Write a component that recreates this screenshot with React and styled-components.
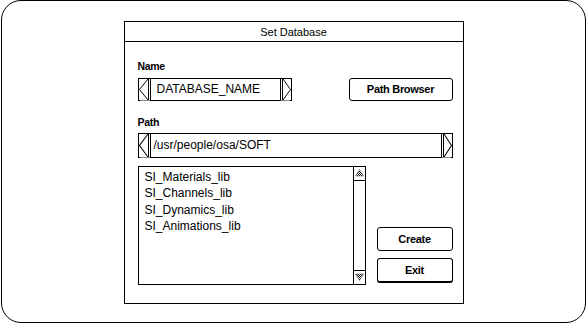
import React from 'react';
import styled, { createGlobalStyle } from 'styled-components';

const GlobalStyle = createGlobalStyle`
  html, body {
    margin: 0;
    padding: 0;
    background: #fff;
  }
  body {
    font-family: "Liberation Sans", Arial, sans-serif;
    color: #000;
  }
`;

const Frame = styled.div`
  box-sizing: border-box;
  width: 585px;
  height: 323px;
  margin: 0 1px;
  border: 1px solid #000;
  border-radius: 20px;
  display: flex;
  align-items: center;
  justify-content: center;
`;

const Dialog = styled.div`
  box-sizing: border-box;
  width: 340px;
  height: 283px;
  margin-top: 1px;
  border: 1px solid #000;
  display: flex;
  flex-direction: column;
`;

const TitleBar = styled.div`
  height: 19px;
  border-bottom: 1px solid #000;
  font-size: 11px;
  line-height: 20px;
  text-align: center;
`;

const Body = styled.div`
  padding: 18px 10px 0 13px;
  display: flex;
  flex-direction: column;
`;

const Label = styled.div`
  font-size: 10.5px;
  font-weight: bold;
  line-height: 13px;
  letter-spacing: -0.3px;
  margin-top: ${(p) => p.$top || 0}px;
  margin-bottom: ${(p) => p.$bottom || 4}px;
`;

const Row = styled.div`
  display: flex;
  align-items: ${(p) => p.$align || 'flex-start'};
  justify-content: space-between;
`;

const Field = styled.div`
  box-sizing: border-box;
  width: ${(p) => p.$width};
  height: ${(p) => p.$height}px;
  border: 1px solid #000;
  display: flex;
  align-items: stretch;
`;

const FieldText = styled.div`
  flex: 1;
  padding-left: ${(p) => p.$pad}px;
  font-size: 12px;
  display: flex;
  align-items: center;
  white-space: nowrap;
  overflow: hidden;
`;

const ArrowBox = styled.div`
  width: ${(p) => p.$w}px;
  box-shadow: 0 2px 0 -1px #8a8a8a;
  display: flex;
`;

const Button = styled.button`
  box-sizing: border-box;
  width: ${(p) => p.$width}px;
  height: ${(p) => p.$height}px;
  padding: 0;
  background: #fff;
  border: 1px solid #000;
  border-bottom: ${(p) => (p.$default ? '2px solid #000' : '1px solid #000')};
  border-radius: 3px;
  font-family: "Liberation Sans", Arial, sans-serif;
  font-size: 11px;
  font-weight: bold;
  letter-spacing: -0.3px;
  color: #000;
`;

const ListArea = styled.div`
  box-sizing: border-box;
  width: 228px;
  height: 119px;
  border: 1px solid #000;
  display: flex;
`;

const ListItems = styled.ul`
  flex: 1;
  margin: 0;
  padding: 2px 0 0 6px;
  list-style: none;
  font-size: 12px;
  line-height: 16.6px;
`;

const ScrollBar = styled.div`
  width: 11px;
  border-left: 1px solid #000;
  display: flex;
  flex-direction: column;
  justify-content: space-between;
`;

const ScrollButton = styled.div`
  height: 13px;
  border-${(p) => (p.$down ? 'top' : 'bottom')}: 1px solid #000;
  display: flex;
  align-items: center;
  justify-content: center;
`;

const ButtonColumn = styled.div`
  display: flex;
  flex-direction: column;
  gap: 7px;
  padding-bottom: 2px;
`;

const LeftArrow = () => (
  <svg width="12" height="100%" viewBox="0 0 12 22" preserveAspectRatio="none">
    <polyline points="9,0 0.5,11 9,22" fill="none" stroke="#000" strokeWidth="1" />
    <line x1="9.5" y1="0" x2="9.5" y2="22" stroke="#000" strokeWidth="1" />
    <line x1="11.5" y1="0" x2="11.5" y2="22" stroke="#000" strokeWidth="1" />
  </svg>
);

const RightArrow = () => (
  <svg width="11" height="100%" viewBox="0 0 11 22" preserveAspectRatio="none">
    <line x1="0.5" y1="0" x2="0.5" y2="22" stroke="#000" strokeWidth="1" />
    <line x1="2.5" y1="0" x2="2.5" y2="22" stroke="#000" strokeWidth="1" />
    <polyline points="3,0 10.5,11 3,22" fill="none" stroke="#000" strokeWidth="1" />
  </svg>
);

const Triangle = ({ down }) => (
  <svg width="9" height="8" viewBox="0 0 9 8">
    <defs>
      <pattern id={down ? 'dd' : 'du'} width="2" height="2" patternUnits="userSpaceOnUse">
        <rect width="1" height="1" fill="#000" />
        <rect x="1" y="1" width="1" height="1" fill="#000" />
      </pattern>
    </defs>
    <polygon
      points={down ? '0.5,1 8.5,1 4.5,7.5' : '4.5,0.5 8.5,7 0.5,7'}
      fill={`url(#${down ? 'dd' : 'du'})`}
      stroke="#666"
      strokeWidth="0.6"
    />
  </svg>
);

const SpinField = ({ value, width, height, pad }) => (
  <Field $width={width} $height={height}>
    <ArrowBox $w={12}>
      <LeftArrow />
    </ArrowBox>
    <FieldText $pad={pad}>{value}</FieldText>
    <ArrowBox $w={11}>
      <RightArrow />
    </ArrowBox>
  </Field>
);

const libs = ['SI_Materials_lib', 'SI_Channels_lib', 'SI_Dynamics_lib', 'SI_Animations_lib'];

export default function App() {
  return (
    <>
      <GlobalStyle />
      <Frame>
        <Dialog>
          <TitleBar>Set Database</TitleBar>
          <Body>
            <Label $bottom={5}>Name</Label>
            <Row>
              <SpinField value="DATABASE_NAME" width="154px" height={23} pad={6} />
              <Button $width={104} $height={23}>Path Browser</Button>
            </Row>
            <Label $top={15}>Path</Label>
            <SpinField value="/usr/people/osa/SOFT" width="100%" height={25} pad={3} />
            <Row $align="flex-end" style={{ marginTop: 8 }}>
              <ListArea>
                <ListItems>
                  {libs.map((lib) => (
                    <li key={lib}>{lib}</li>
                  ))}
                </ListItems>
                <ScrollBar>
                  <ScrollButton>
                    <Triangle />
                  </ScrollButton>
                  <ScrollButton $down>
                    <Triangle down />
                  </ScrollButton>
                </ScrollBar>
              </ListArea>
              <ButtonColumn>
                <Button $width={76} $height={24}>Create</Button>
                <Button $width={76} $height={25} $default>Exit</Button>
              </ButtonColumn>
            </Row>
          </Body>
        </Dialog>
      </Frame>
    </>
  );
}
